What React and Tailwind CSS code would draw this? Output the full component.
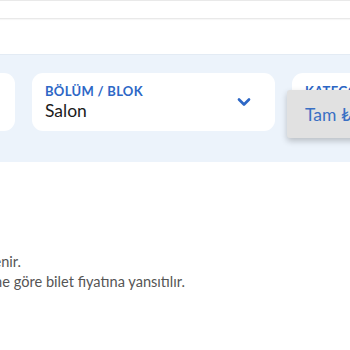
import { ChevronDown } from "lucide-react";

function Field({ label, value, chevron, className = "" }) {
  return (
    <div className={"relative h-[58px] w-[243px] shrink-0 rounded-[11px] bg-white pl-[13px] pt-[10px] " + className}>
      <div className="text-[13px] leading-[17px] font-bold tracking-[0.3px] text-[#2d67c6]">{label}</div>
      <div className="text-[17.5px] leading-[22px] text-[#1b1b1b]">{value}</div>
      {chevron && (
        <ChevronDown size={20} strokeWidth={3.2} className="absolute right-[21px] top-[19px] text-[#2d67c6]" />
      )}
    </div>
  );
}

export default function App() {
  return (
    <div className="h-[350px] w-[350px] overflow-hidden bg-white font-['Lato','Noto_Sans',sans-serif]">
      <div className="h-[19px] border-t border-b border-[#e9e9e9] shadow-[0_1px_1px_rgba(0,0,0,0.03)]" />
      <div className="h-[35px]" />

      {/* filtre paneli */}
      <div className="relative h-[108px] border-t border-[#e3ebf4] bg-[#ecf3fb] pt-[18px]">
        <div className="flex gap-[17px]">
          <Field label="ETKİNLİK" value="Konser" className="-ml-[228px]" />
          <Field label="BÖLÜM / BLOK" value="Salon" chevron />
          <Field label="KATEGORİ" value="Tam" />
        </div>

        {/* açık menü */}
        <div className="absolute left-[287px] top-[35px] h-[48px] w-[120px] rounded-[3px] bg-[#e1e1e1] pl-[18px] pt-[13px] shadow-[0_3px_6px_rgba(0,0,0,0.22)]">
          <span className="text-[17.5px] leading-[22px] text-[#3a70c4]">Tam ₺</span>
        </div>
      </div>

      <div className="mt-[90px] text-[14.6px] leading-[20px] text-[#555]">
        <div className="flex w-[21px] justify-end whitespace-nowrap">
          <span>Bilet fiyatı seçilen kategoriye göre belirlenir.</span>
        </div>
        <div className="flex w-[185px] justify-end whitespace-nowrap">
          <span>Ek ücretler seçtiğiniz bölümüne göre bilet fiyatına yansıtılır.</span>
        </div>
      </div>
    </div>
  );
}
